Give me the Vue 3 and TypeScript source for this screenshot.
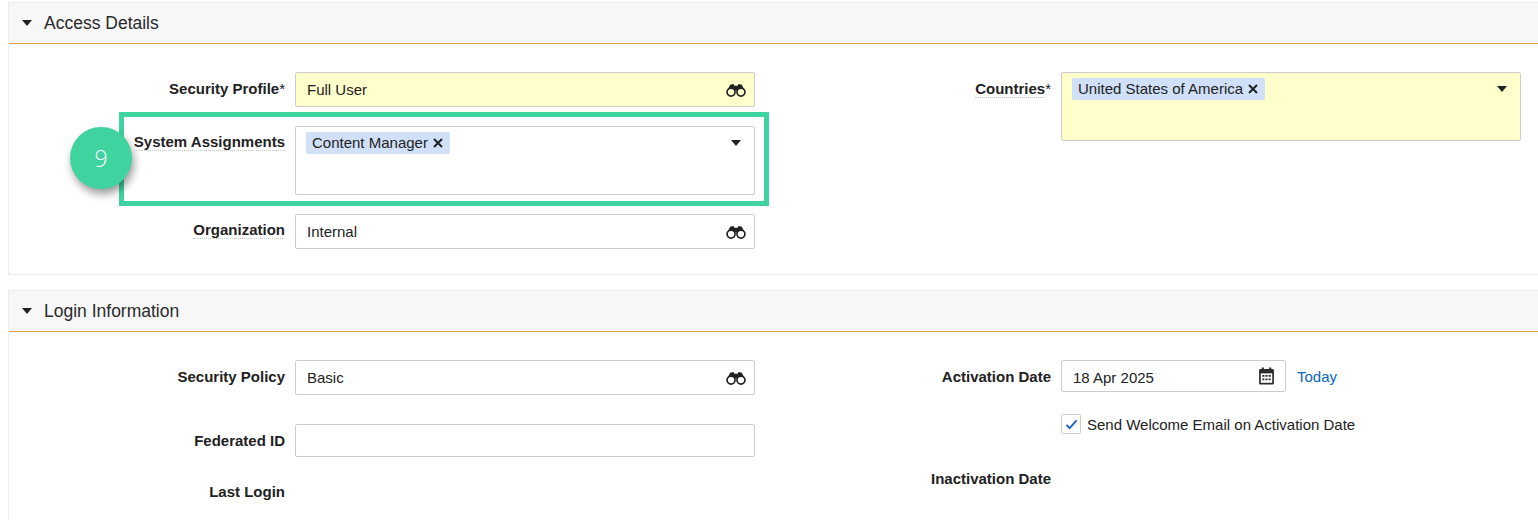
<script setup lang="ts">
const ringPath = 'M1 8.500a3.800 3.800 0 1 0 7.600 0a3.800 3.800 0 1 0-7.600 0ZM10.400 8.500a3.800 3.800 0 1 0 7.600 0a3.800 3.800 0 1 0-7.600 0Z'
const capPath = 'M1.200 7 3.600 2.200Q4.200 1 5.600 1H7.400L8 2.400h3L11.600 1h1.800q1.400 0 2 1.200L17.800 7Q16 4.200 14 4.600 11.800 5 11 7H8Q7.200 5 5 4.600 3 4.200 1.200 7Z'
</script>

<template>
  <div class="page">
    <section class="panel first">
      <header class="head">
        <span class="caret"></span>
        <h2>Access Details</h2>
      </header>
      <div class="body access">
        <div class="col">
          <div class="row">
            <label class="lab low">Security Profile<i>*</i></label>
            <div class="field req">
              <span>Full User</span>
              <svg class="bino" viewBox="0 0 19 13"><path :d="ringPath" fill="none" stroke="#222" stroke-width="1.600" /><path :d="capPath" fill="#222" /></svg>
            </div>
          </div>
          <div class="row mt19">
            <label class="lab"><span class="dotted">System Assignments</span></label>
            <div class="field multi">
              <span class="chip">Content Manager<svg class="x" viewBox="0 0 10 10"><path d="M1 1l8 8M9 1l-8 8" fill="none" stroke="#222" stroke-width="2" /></svg></span>
              <span class="caret dd"></span>
            </div>
          </div>
          <div class="row mt19">
            <label class="lab"><span class="dotted">Organization</span></label>
            <div class="field">
              <span>Internal</span>
              <svg class="bino" viewBox="0 0 19 13"><path :d="ringPath" fill="none" stroke="#222" stroke-width="1.600" /><path :d="capPath" fill="#222" /></svg>
            </div>
          </div>
        </div>
        <div class="col right">
          <div class="row">
            <label class="lab low"><span class="dotted">Countries</span><i>*</i></label>
            <div class="field multi req">
              <span class="chip">United States of America<svg class="x" viewBox="0 0 10 10"><path d="M1 1l8 8M9 1l-8 8" fill="none" stroke="#222" stroke-width="2" /></svg></span>
              <span class="caret dd"></span>
            </div>
          </div>
        </div>
      </div>
      <div class="highlight"></div>
      <div class="badge">9</div>
    </section>

    <section class="panel second">
      <header class="head">
        <span class="caret"></span>
        <h2>Login Information</h2>
      </header>
      <div class="body login">
        <div class="col">
          <div class="row">
            <label class="lab low">Security Policy</label>
            <div class="field">
              <span>Basic</span>
              <svg class="bino" viewBox="0 0 19 13"><path :d="ringPath" fill="none" stroke="#222" stroke-width="1.600" /><path :d="capPath" fill="#222" /></svg>
            </div>
          </div>
          <div class="row mt29">
            <label class="lab low">Federated ID</label>
            <div class="field short"></div>
          </div>
          <div class="row mt18">
            <label class="lab low">Last Login</label>
          </div>
        </div>
        <div class="col right">
          <div class="row">
            <label class="lab low">Activation Date</label>
            <div class="field date">
              <span>18 Apr 2025</span>
              <svg class="cal" viewBox="0 0 16 17">
                <path d="M1 3.200A1.200 1.200 0 0 1 2.200 2H3.500V.5h2V2h5V.5h2V2h1.300A1.200 1.200 0 0 1 15 3.200v12.100a1.200 1.200 0 0 1-1.200 1.200H2.200A1.200 1.200 0 0 1 1 15.300Z" fill="#2b2b2b" />
                <rect x="2.600" y="6" width="10.800" height="8.900" fill="#fff" />
                <path d="M4 7.500h2v1.600H4zM7 7.500h2v1.600H7zM10 7.500h2v1.600h-2zM4 10.800h2v1.600H4zM7 10.800h2v1.600H7zM10 10.800h2v1.600h-2z" fill="#2b2b2b" />
              </svg>
            </div>
            <a class="today">Today</a>
          </div>
          <div class="check-row">
            <span class="box">
              <svg viewBox="0 0 14 12"><path d="M1.500 6.500 5 10l7.500-8.500" fill="none" stroke="#1a66c9" stroke-width="2" /></svg>
            </span>
            <span>Send Welcome Email on Activation Date</span>
          </div>
          <div class="row inact">
            <label class="lab low">Inactivation Date</label>
          </div>
        </div>
      </div>
    </section>
  </div>
</template>

<style>
html, body { margin: 0; background: #fff; overflow: hidden; }
</style>

<style scoped>
.page {
  width: 1538px;
  height: 520px;
  overflow: hidden;
  padding: 2px 0 0 8px;
  box-sizing: border-box;
  font-family: "Liberation Sans", Arial, sans-serif;
  font-size: 15px;
  color: #222;
}
.panel {
  position: relative;
  width: 1540px;
  box-sizing: border-box;
  border: 1px solid #ececec;
  background: #fff;
}
.second { margin-top: 15px; border-bottom: 0; height: 240px; }
.head {
  height: 40px;
  background: #f7f7f7;
  border-bottom: 1px solid #e8a04c;
  display: flex;
  align-items: center;
  padding-left: 13px;
}
.head h2 {
  margin: 0 0 0 12px;
  font-size: 17.500px;
  font-weight: 400;
  color: #2a2a2a;
}
.caret {
  width: 0;
  height: 0;
  border-left: 5.500px solid transparent;
  border-right: 5.500px solid transparent;
  border-top: 6px solid #222;
}
.body { display: flex; }
.access { padding: 28px 0 25px; }
.login { padding: 28px 0 0; }
.col { width: 746px; }
.right { width: 760px; }
.right .lab { width: 296px; }
.row { display: flex; align-items: flex-start; }
.mt19 { margin-top: 19px; }
.mt29 { margin-top: 29px; }
.mt18 { margin-top: 18px; }
.lab {
  width: 276px;
  margin-right: 10px;
  padding-top: 7px;
  flex: none;
  text-align: right;
  font-weight: 700;
  font-size: 15px;
  line-height: 17px;
  color: #222;
}
.low { padding-top: 8px; }
.lab i { font-style: normal; font-weight: 400; }
.dotted { border-bottom: 1px dotted #c8c8c8; }
.field {
  width: 460px;
  height: 35px;
  flex: none;
  box-sizing: border-box;
  border: 1px solid #ccc;
  border-radius: 2px;
  background: #fff;
  display: flex;
  align-items: center;
  justify-content: space-between;
  padding: 0 8px 0 11px;
}
.req { background: #ffffcc; }
.short { height: 33px; }
.multi {
  height: 69px;
  align-items: flex-start;
  padding: 5px 13px 0 10px;
}
.chip {
  height: 22px;
  line-height: 22px;
  padding: 0 7px 0 6px;
  background: #d0e0f8;
  border-radius: 2px;
  color: #222;
  white-space: nowrap;
  display: flex;
  align-items: center;
}
.x { width: 10px; height: 10px; margin-left: 5px; }
.dd { margin-top: 8px; }
.bino { width: 20px; height: 14px; }
.date { width: 225px; height: 32px; padding: 2px 10px 0 11px; }
.cal { width: 17px; height: 18px; margin-top: -2px; }
.today { margin: 8px 0 0 11px; color: #0b66c3; line-height: 17px; }
.check-row {
  display: flex;
  align-items: center;
  gap: 6px;
  margin: 22px 0 0 306px;
  height: 20px;
}
.box {
  width: 20px;
  height: 20px;
  box-sizing: border-box;
  border: 1px solid #ccc;
  border-radius: 2px;
  display: flex;
  align-items: center;
  justify-content: center;
}
.box svg { width: 13px; height: 11px; }
.inact { margin-top: 28px; }
.highlight {
  position: absolute;
  left: 110px;
  top: 109px;
  width: 650px;
  height: 94px;
  box-sizing: border-box;
  border: 5px solid #3fd3a0;
}
.badge {
  position: absolute;
  left: 61px;
  top: 124px;
  width: 62px;
  height: 62px;
  border-radius: 50%;
  background: #3fd3a0;
  color: #fff;
  font-family: "Open Sans", sans-serif;
  font-weight: 300;
  font-size: 23px;
  display: flex;
  align-items: center;
  justify-content: center;
  box-shadow: 2px 5px 8px rgba(0, 0, 0, 0.4);
}
</style>
